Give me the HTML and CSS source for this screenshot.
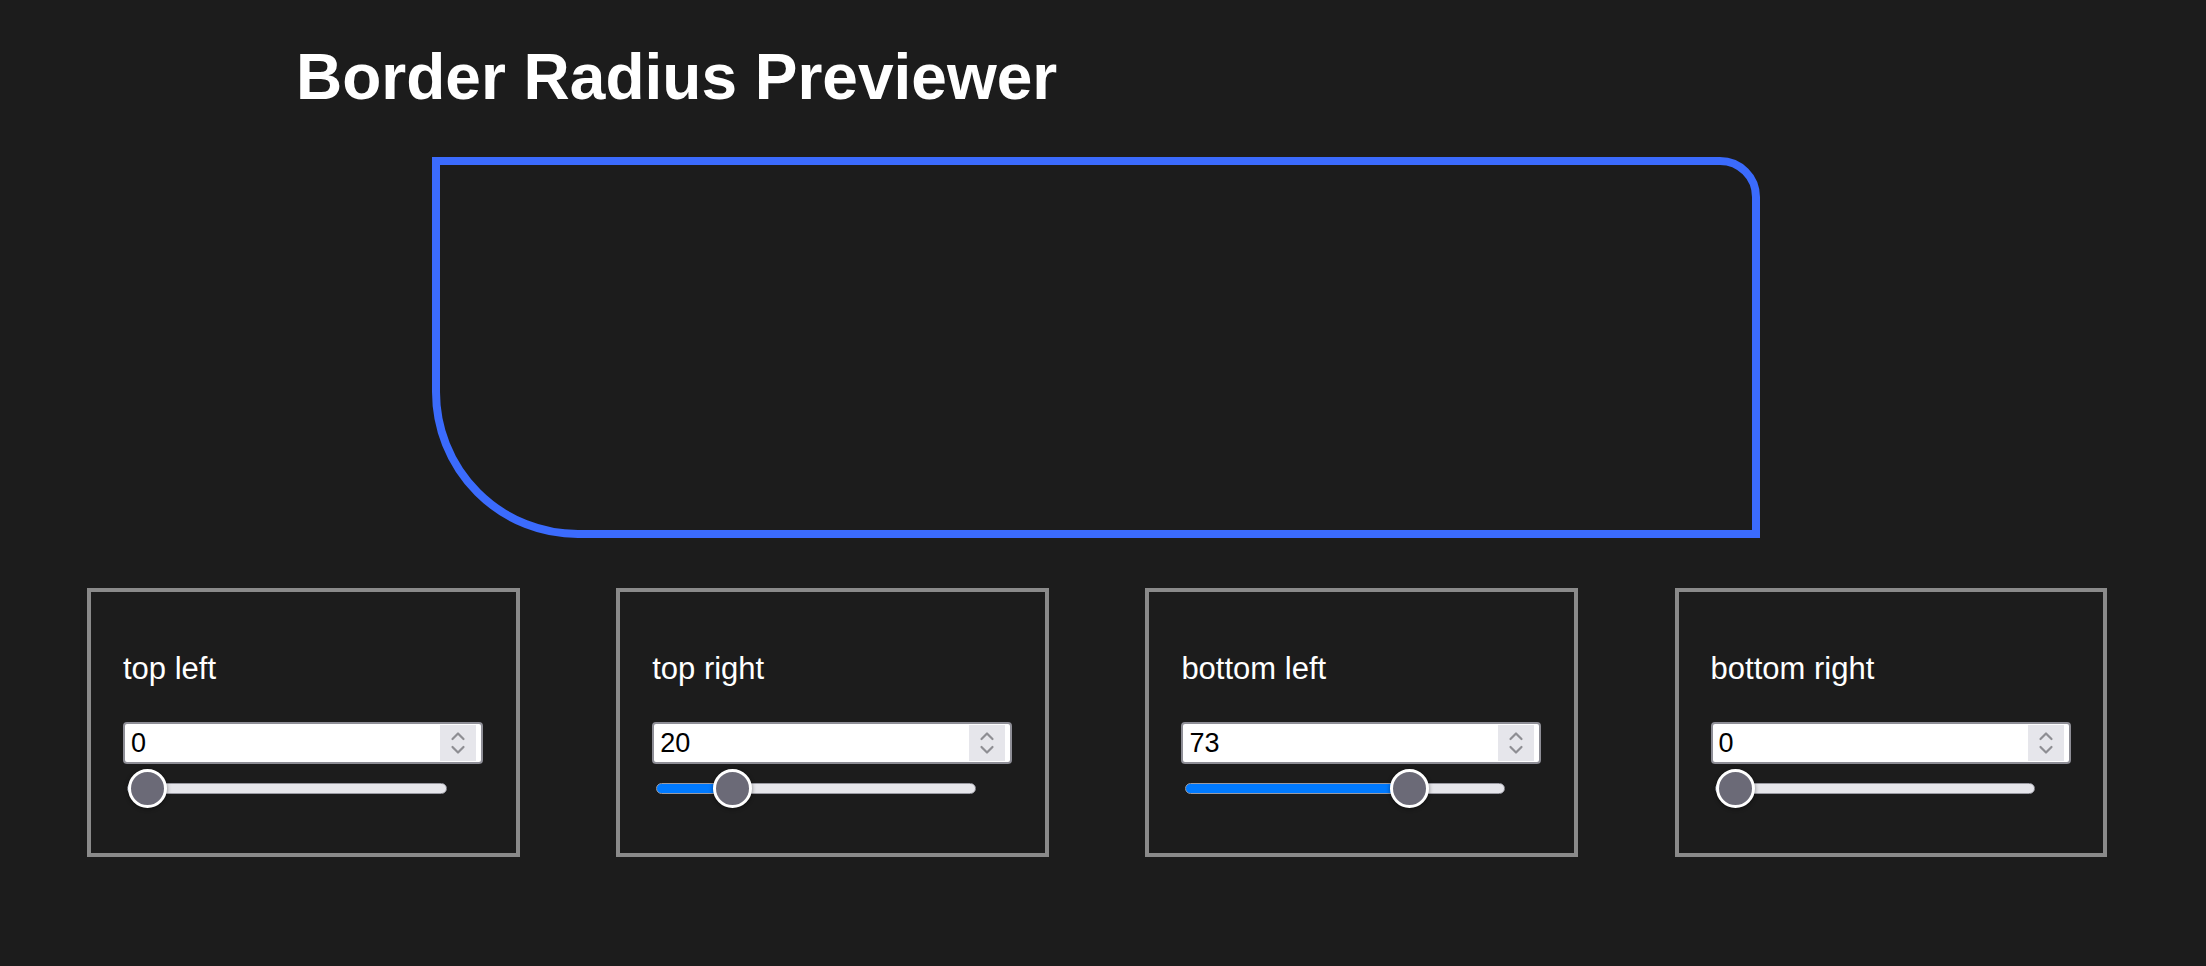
FILE: index.html
```html
<!DOCTYPE html>
<html lang="en">
<head>
<meta charset="utf-8">
<title>Border Radius Previewer</title>
<link rel="stylesheet" href="styles.css">
</head>
<body>
<main class="app">
  <h1 class="title">Border Radius Previewer</h1>
  <div class="preview" style="border-radius: 0 40px 0 146px;"></div>
  <section class="controls">
    <div class="control">
      <label class="control-label">top left</label>
      <div class="number-field">
        <input class="number-input" type="text" value="0">
        <span class="spinner"><svg width="36" height="36" viewBox="0 0 36 36"><polyline points="12.5,14 18,8.5 23.5,14" /><polyline points="12.5,22 18,27.5 23.5,22" /></svg></span>
      </div>
      <input class="range" type="range" min="0" max="100" value="0" style="--v:0">
    </div>
    <div class="control">
      <label class="control-label">top right</label>
      <div class="number-field">
        <input class="number-input" type="text" value="20">
        <span class="spinner"><svg width="36" height="36" viewBox="0 0 36 36"><polyline points="12.5,14 18,8.5 23.5,14" /><polyline points="12.5,22 18,27.5 23.5,22" /></svg></span>
      </div>
      <input class="range" type="range" min="0" max="100" value="20" style="--v:20">
    </div>
    <div class="control">
      <label class="control-label">bottom left</label>
      <div class="number-field">
        <input class="number-input" type="text" value="73">
        <span class="spinner"><svg width="36" height="36" viewBox="0 0 36 36"><polyline points="12.5,14 18,8.5 23.5,14" /><polyline points="12.5,22 18,27.5 23.5,22" /></svg></span>
      </div>
      <input class="range" type="range" min="0" max="100" value="73" style="--v:73">
    </div>
    <div class="control">
      <label class="control-label">bottom right</label>
      <div class="number-field">
        <input class="number-input" type="text" value="0">
        <span class="spinner"><svg width="36" height="36" viewBox="0 0 36 36"><polyline points="12.5,14 18,8.5 23.5,14" /><polyline points="12.5,22 18,27.5 23.5,22" /></svg></span>
      </div>
      <input class="range" type="range" min="0" max="100" value="0" style="--v:0">
    </div>
  </section>
</main>
</body>
</html>
```
FILE: styles.css
```css
html, body {
  margin: 0;
  padding: 0;
  background: #1c1c1c;
  color: #ffffff;
  font-family: "Liberation Sans", Arial, Helvetica, sans-serif;
}

.app {
  padding-top: 40px;
}

.title {
  margin: 0 0 0 296px;
  font-size: 64px;
  line-height: 74px;
  font-weight: 700;
  color: #ffffff;
}

.preview {
  box-sizing: border-box;
  margin: 43px 0 0 432px;
  width: 1328px;
  height: 381px;
  border: 8px solid #3b6bfd;
}

.controls {
  display: flex;
  gap: 96.7px;
  margin-top: 50px;
  padding-left: 87px;
}

.control {
  box-sizing: border-box;
  flex: 0 0 432.5px;
  height: 269px;
  border: 4px solid #8a8a8a;
  padding: 0 32px;
  display: flex;
  flex-direction: column;
  align-items: flex-start;
}

.control-label {
  display: block;
  margin-top: 59px;
  font-size: 31px;
  line-height: 36px;
  color: #ffffff;
}

.number-field {
  box-sizing: border-box;
  margin-top: 35px;
  width: 360px;
  height: 42px;
  border: 2px solid #8e8e96;
  border-radius: 4px;
  background: #ffffff;
  display: flex;
  align-items: center;
}

.number-input {
  flex: 1;
  min-width: 0;
  height: 100%;
  box-sizing: border-box;
  border: 0;
  outline: none;
  padding: 0 0 0 6px;
  margin: 0;
  background: transparent;
  font-family: "Liberation Sans", Arial, Helvetica, sans-serif;
  font-size: 27px;
  color: #000000;
}

.spinner {
  display: block;
  width: 36px;
  height: 36px;
  margin-right: 5px;
  background: #e6e6eb;
}

.spinner svg {
  display: block;
  fill: none;
  stroke: #8e8e93;
  stroke-width: 2.2;
  stroke-linecap: round;
  stroke-linejoin: round;
}

.range {
  -webkit-appearance: none;
  appearance: none;
  display: block;
  width: 320px;
  height: 39px;
  margin: 5px 0 0 4px;
  padding: 0;
  background: transparent;
}

.range::-webkit-slider-runnable-track {
  box-sizing: border-box;
  height: 11px;
  border-radius: 6px;
  border: 1px solid #9a9aa2;
  background: linear-gradient(to right,
    #007aff 0,
    #007aff calc(19.5px + var(--v) * 2.81px),
    #e6e6eb calc(19.5px + var(--v) * 2.81px),
    #e6e6eb 100%);
}

.range::-webkit-slider-thumb {
  -webkit-appearance: none;
  appearance: none;
  box-sizing: border-box;
  width: 39px;
  height: 39px;
  margin-top: -15px;
  border-radius: 50%;
  background: #6b6a77;
  border: 3px solid #ffffff;
  box-shadow: 0 1px 4px rgba(0, 0, 0, 0.45);
}
```
